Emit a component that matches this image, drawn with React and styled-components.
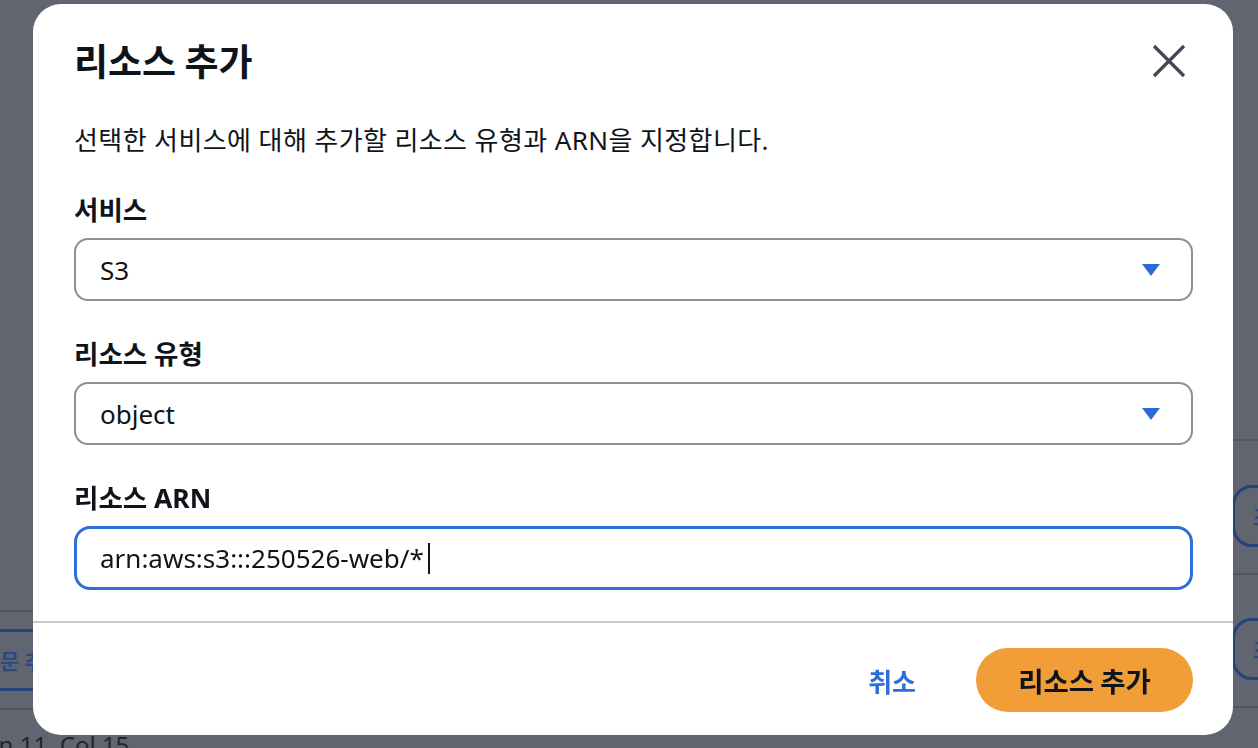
import React from "react";
import styled, { createGlobalStyle } from "styled-components";

const Global = createGlobalStyle`
  html, body { margin: 0; padding: 0; }
  body {
    background: #60656f;
    overflow: hidden;
    font-family: "Noto Sans", "Noto Sans CJK KR", sans-serif;
    color: #0f141a;
  }
  * { box-sizing: border-box; }
`;

const Page = styled.div`
  width: 1258px;
  height: 748px;
  display: flex;
  justify-content: space-between;
  align-items: flex-start;
  overflow: hidden;
  background: #60656f;
`;

const LeftColumn = styled.div`
  width: 60px;
  flex-shrink: 0;
  display: flex;
  flex-direction: column;
  padding-top: 610px;
  & > * { flex-shrink: 0; }
`;

const RightColumn = styled.div`
  width: 80px;
  flex-shrink: 0;
  margin-right: -54px;
  display: flex;
  flex-direction: column;
  padding-top: 439px;
  & > * { flex-shrink: 0; }
`;

const Rule = styled.div`
  height: 2px;
  background: #50555f;
  margin-top: ${(p) => p.$gap || 0}px;
`;

const GhostButton = styled.div`
  margin-top: ${(p) => p.$gap || 0}px;
  height: ${(p) => p.$h || 60}px;
  border: 3px solid #26447c;
  border-left: ${(p) => (p.$side === "left" ? "none" : "3px solid #26447c")};
  border-radius: ${(p) => (p.$side === "left" ? "0 20px 20px 0" : "20px 0 0 20px")};
  display: flex;
  align-items: center;
  padding-left: ${(p) => p.$pad}px;
  font-family: "Noto Sans CJK KR", sans-serif;
  font-size: 21px;
  font-weight: 700;
  color: #2d4a85;
  white-space: nowrap;
`;

const Status = styled.div`
  margin-top: 20px;
  margin-left: -14px;
  font-size: 24px;
  line-height: 30px;
  color: #22262d;
  white-space: nowrap;
`;

const Modal = styled.div`
  position: fixed;
  top: 4px;
  left: 33px;
  width: 1200px;
  height: 731px;
  background: #ffffff;
  border-radius: 28px;
  display: flex;
  flex-direction: column;
  font-family: "Noto Sans", "Noto Sans CJK KR", sans-serif;
`;

const Body = styled.div`
  padding: 33px 40px 0 41px;
  display: flex;
  flex-direction: column;
`;

const Header = styled.div`
  display: flex;
  align-items: center;
  justify-content: space-between;
  height: 46px;
`;

const Title = styled.h1`
  margin: 0;
  font-family: "Noto Sans CJK KR", sans-serif;
  font-size: 37px;
  font-weight: 700;
  line-height: 46px;
  color: #0f141a;
`;

const CloseButton = styled.button`
  width: 36px;
  height: 36px;
  margin-right: 6px;
  margin-top: 2px;
  padding: 0;
  border: none;
  background: none;
  display: flex;
  align-items: center;
  justify-content: center;
  cursor: pointer;
`;

const Description = styled.p`
  margin: 39px 0 0;
  font-size: 26px;
  letter-spacing: 0.4px;
  line-height: 36px;
  color: #0f141a;
`;

const Field = styled.div`
  display: flex;
  flex-direction: column;
  margin-top: ${(p) => p.$gap}px;
`;

const Label = styled.label`
  font-family: "Noto Sans", "Noto Sans CJK KR", sans-serif;
  font-size: 26.5px;
  font-weight: 700;
  line-height: 36px;
  color: #0f141a;
`;

const SelectBox = styled.div`
  margin-top: 10px;
  height: 63px;
  border: 2px solid #8c8f96;
  border-radius: 14px;
  display: flex;
  align-items: center;
  justify-content: space-between;
  padding: 0 30px 0 24px;
  font-size: 26px;
  color: #0f141a;
`;

const InputBox = styled.div`
  margin-top: 10px;
  height: 64px;
  border: 3px solid #2f6ed8;
  border-radius: 16px;
  display: flex;
  align-items: center;
  padding: 0 24px 0 23px;
  font-size: 26px;
  color: #0f141a;
`;

const Cursor = styled.span`
  display: inline-block;
  width: 2px;
  height: 31px;
  margin-left: 4px;
  background: #0f141a;
`;

const Divider = styled.div`
  margin-top: 31px;
  height: 2px;
  background: #c8c9cf;
`;

const Footer = styled.div`
  display: flex;
  justify-content: flex-end;
  align-items: center;
  gap: 60px;
  padding: 25px 40px 0 0;
`;

const LinkButton = styled.button`
  border: none;
  background: none;
  padding: 0;
  font-family: "Noto Sans CJK KR", sans-serif;
  font-size: 26px;
  font-weight: 700;
  color: #2f6ed8;
  cursor: pointer;
`;

const PrimaryButton = styled.button`
  width: 217px;
  height: 64px;
  border: none;
  border-radius: 32px;
  background: #f19e38;
  font-family: "Noto Sans CJK KR", sans-serif;
  font-size: 27.5px;
  font-weight: 700;
  color: #0f141a;
  cursor: pointer;
`;

const Caret = () => (
  <svg width="20" height="14" viewBox="0 0 20 14">
    <path d="M1 1 H19 L10 13 Z" fill="#2c6bd6" />
  </svg>
);

const CloseIcon = () => (
  <svg width="34" height="34" viewBox="0 0 34 34">
    <path d="M2 2 L32 32 M32 2 L2 32" stroke="#424650" strokeWidth="3.2" strokeLinecap="butt" />
  </svg>
);

export default function App() {
  return (
    <>
      <Global />
      <Page>
        <LeftColumn>
          <Rule />
          <GhostButton $gap={17} $h={62} $side="left" $pad={0}>
            문 추가
          </GhostButton>
          <Rule $gap={17} />
          <Status>Ln 11, Col 15</Status>
        </LeftColumn>
        <RightColumn>
          <Rule />
          <GhostButton $gap={44} $h={62} $side="right" $pad={18}>
            조건 추가
          </GhostButton>
          <Rule $gap={26} />
          <GhostButton $gap={43} $h={62} $side="right" $pad={18}>
            조건 추가
          </GhostButton>
          <Rule $gap={26} />
        </RightColumn>
      </Page>
      <Modal role="dialog" aria-modal="true">
        <Body>
          <Header>
            <Title>리소스 추가</Title>
            <CloseButton aria-label="닫기">
              <CloseIcon />
            </CloseButton>
          </Header>
          <Description>선택한 서비스에 대해 추가할 리소스 유형과 ARN을 지정합니다.</Description>
          <Field $gap={34}>
            <Label>서비스</Label>
            <SelectBox>
              <span>S3</span>
              <Caret />
            </SelectBox>
          </Field>
          <Field $gap={35}>
            <Label>리소스 유형</Label>
            <SelectBox>
              <span>object</span>
              <Caret />
            </SelectBox>
          </Field>
          <Field $gap={35}>
            <Label>리소스 ARN</Label>
            <InputBox>
              <span>arn:aws:s3:::250526-web/*</span>
              <Cursor />
            </InputBox>
          </Field>
        </Body>
        <Divider />
        <Footer>
          <LinkButton>취소</LinkButton>
          <PrimaryButton>리소스 추가</PrimaryButton>
        </Footer>
      </Modal>
    </>
  );
}
